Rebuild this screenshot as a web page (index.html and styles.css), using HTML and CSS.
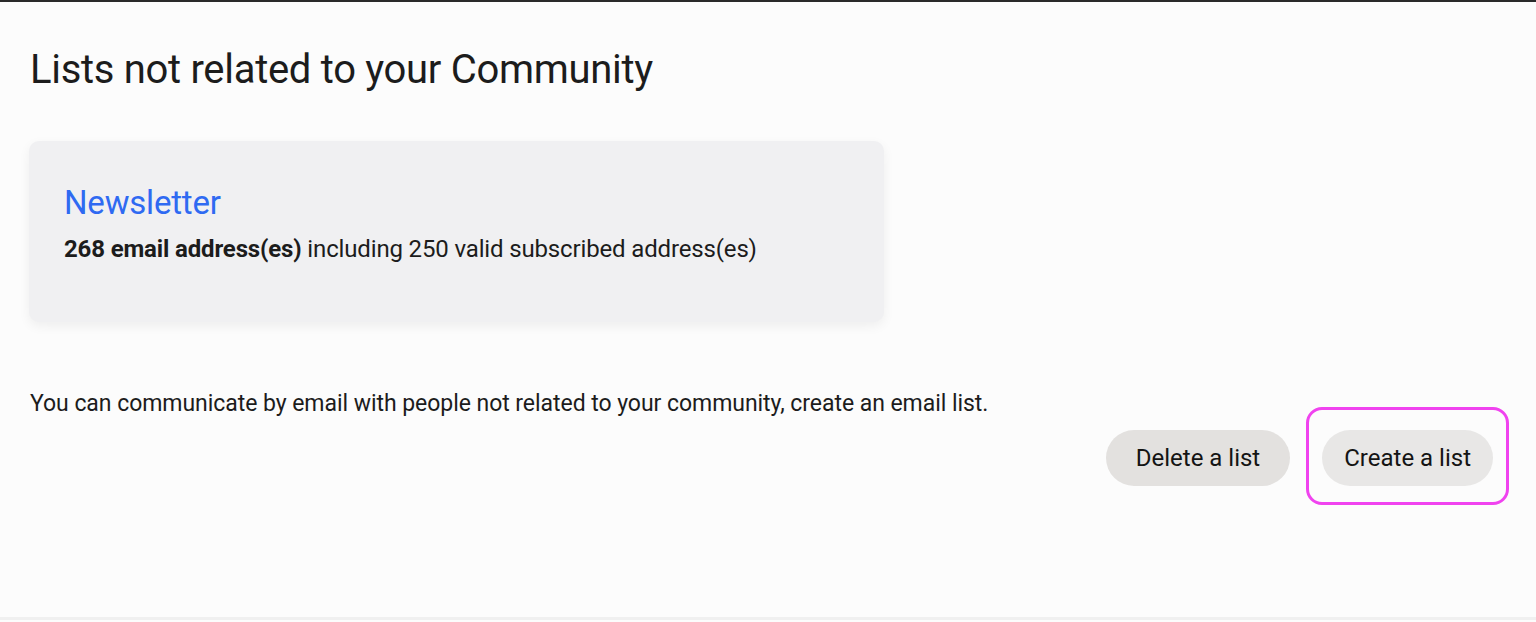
FILE: index.html
```html
<!DOCTYPE html>
<html>
<head>
<meta charset="utf-8">
<link rel="stylesheet" href="styles.css">
</head>
<body>
<div class="page">
  <h1 class="title">Lists not related to your Community</h1>
  <div class="card">
    <a class="card-title" href="#">Newsletter</a>
    <p class="card-text"><strong>268 email address(es)</strong> including 250 valid subscribed address(es)</p>
  </div>
  <p class="info">You can communicate by email with people not related to your community, create an email list.</p>
  <div class="actions">
    <button class="btn btn-delete">Delete a list</button>
    <div class="highlight">
      <button class="btn btn-create">Create a list</button>
    </div>
  </div>
</div>
<div class="bottom"></div>
</body>
</html>
```
FILE: styles.css
```css
html, body {
  margin: 0;
  padding: 0;
}
body {
  background: #fcfcfc;
  font-family: Roboto, "Liberation Sans", sans-serif;
  color: #1c1c1c;
  border-top: 2px solid #2a2a2a;
  height: 620px;
  box-sizing: border-box;
  display: flex;
  flex-direction: column;
}
.page {
  flex: 1;
  padding: 44px 27px 0 30px;
}
.title {
  margin: 0;
  font-size: 40px;
  font-weight: 400;
  letter-spacing: -0.3px;
  line-height: 48px;
  color: #1c1c1c;
}
.card {
  margin-top: 47px;
  margin-left: -1px;
  width: 855px;
  height: 181px;
  box-sizing: border-box;
  background: #f0f0f2;
  border-radius: 10px;
  box-shadow: 0 4px 12px rgba(0,0,0,0.06);
  padding: 42px 35px;
}
.card-title {
  display: block;
  font-size: 33px;
  line-height: 40px;
  color: #2f6af2;
  text-decoration: none;
  letter-spacing: -0.2px;
}
.card-text {
  margin: 11px 0 0;
  font-size: 24px;
  line-height: 30px;
  letter-spacing: -0.15px;
}
.card-text strong {
  font-weight: 700;
}
.info {
  margin: 68px 0 0;
  font-size: 23px;
  line-height: 28px;
  letter-spacing: -0.05px;
}
.actions {
  display: flex;
  justify-content: flex-end;
  align-items: flex-start;
  gap: 16px;
  margin-top: -11px;
}
.btn {
  font-family: Roboto, "Liberation Sans", sans-serif;
  font-size: 24px;
  color: #141414;
  border: none;
  border-radius: 28px;
  height: 56px;
}
.btn-delete {
  background: #e3e1df;
  padding: 0 30px;
  margin-top: 23px;
}
.btn-create {
  background: #e8e7e6;
  padding: 0 22px;
}
.highlight {
  border: 3px solid #f043ef;
  border-radius: 16px;
  padding: 20px 13px 16px 13px;
}
.bottom {
  height: 3px;
  background: #f0f0f0;
}
```
